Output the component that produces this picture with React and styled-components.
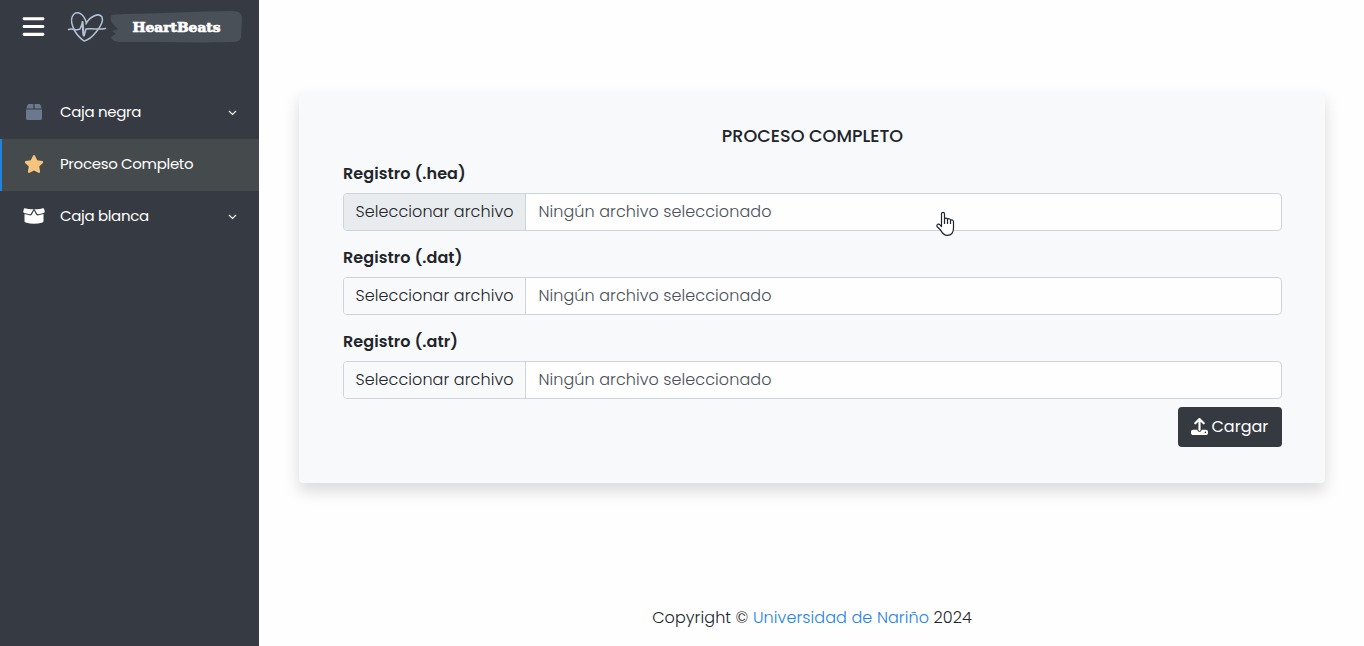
import React from "react";
import styled, { createGlobalStyle } from "styled-components";
import { FaBars, FaStar, FaUpload } from "react-icons/fa6";

const GlobalStyle = createGlobalStyle`
  *, *::before, *::after { box-sizing: border-box; }
  body {
    margin: 0;
    background: #fefefe;
    color: #212529;
    font: 300 16px/24px Poppins, Inter, "Open Sans", sans-serif;
    overflow: hidden;
  }
`;

const Page = styled.div`
  display: flex;
  height: 100vh;
`;

const Sidebar = styled.aside`
  flex: 0 0 259px;
  background: #363a42;
  color: #fff;
`;

const Brand = styled.header`
  display: flex;
  align-items: center;
  height: 54px;
  padding-left: 22px;
`;

const MenuButton = styled.button`
  display: flex;
  width: 23px;
  padding: 0 0 1px;
  border: 0;
  background: none;
  color: #fff;
`;

const Logo = styled.svg`
  display: block;
  margin-left: 20px;
  font: 700 13.5px "DejaVu Serif", serif;
`;

const Nav = styled.nav`
  padding-top: 33px;
`;

const NavItem = styled.a`
  display: flex;
  align-items: center;
  height: 52px;
  padding-right: 22px;
  border-left: 2px solid ${(p) => (p.$active ? "#1f83e0" : "transparent")};
  background: ${(p) => (p.$active ? "#454a4d" : "transparent")};
  font-size: 15px;
  font-weight: 400;
`;

const NavIcon = styled.span`
  display: flex;
  justify-content: center;
  width: 64px;
  margin-right: -6px;
  padding-bottom: 2px;
  color: ${(p) => p.$color};
  flex: none;
`;

const NavLabel = styled.span`
  flex: 1;
  padding-bottom: 2px;
`;

const Fit = styled.span`
  letter-spacing: ${(p) => p.$track || 0}px;
  white-space: nowrap;
`;

const Main = styled.main`
  flex: 1;
  display: flex;
  flex-direction: column;
  padding: 92px 39px 0 40px;
`;

const Card = styled.form`
  height: 391px;
  padding: 32px 43px 36px 44px;
  border-radius: 4px;
  background: #f8f9fb;
  box-shadow: 0 8px 16px rgba(0, 0, 0, 0.15);
`;

const Title = styled.h1`
  margin: 0 0 14px;
  font-size: 17.6px;
  line-height: 24px;
  font-weight: 500;
  text-align: center;
`;

const Field = styled.div`
  margin-bottom: ${(p) => (p.$last ? 8 : 15)}px;
`;

const Label = styled.label`
  display: block;
  margin-bottom: 7px;
  font-weight: 600;
`;

const FileInput = styled.div`
  display: flex;
  height: 38px;
  border: 1px solid #ced4da;
  border-radius: 4px;
  background: #fefefe;
  overflow: hidden;
  line-height: 35px;
`;

const FileButton = styled.span`
  flex: 0 0 182px;
  padding-left: 11.5px;
  border-right: 1px solid #ced4da;
  background: ${(p) => (p.$hover ? "#e9ecef" : "#f8f9fb")};
`;

const FileName = styled.span`
  padding-left: 12.5px;
  color: #495057;
`;

const Actions = styled.div`
  display: flex;
  justify-content: flex-end;
`;

const Submit = styled.button`
  display: flex;
  align-items: center;
  gap: 3.5px;
  width: 104px;
  height: 40px;
  padding: 0 0 0 13px;
  border: 0;
  border-radius: 4px;
  background: #343a40;
  color: #fff;
  font: inherit;
  font-weight: 400;
`;

const SubmitIcon = styled(FaUpload)`
  width: 17px;
  height: 17px;
  margin-bottom: 2px;
`;

const Footer = styled.footer`
  margin-top: 123px;
  text-align: center;
`;

const Link = styled.a`
  color: #1f83e8;
`;

const Pointer = styled.svg`
  position: absolute;
  left: 935px;
  top: 211px;
`;

function Chevron() {
  return (
    <svg width="9" height="6" viewBox="0 0 9 6" fill="none" stroke="#fff" strokeWidth="1.2">
      <path d="M1 1 4.5 4.5 8 1" />
    </svg>
  );
}

function ClosedBox() {
  return (
    <svg width="16" height="16" viewBox="0 0 16 16" fill="currentColor">
      <path d="M3 0H7.400V4.500H.3L1.400 1.200Q1.900 0 3 0ZM8.600 0H13Q14.100 0 14.600 1.200L15.700 4.500H8.600ZM0 5.600H16V14.500Q16 16 14.500 16H1.500Q0 16 0 14.500Z" />
    </svg>
  );
}

function OpenBox() {
  return (
    <svg width="22" height="16" viewBox="0 0 22 16" fill="currentColor">
      <path d="M2 .3Q6.500 1.600 10.600 1L8 5.600Q7.500 6.500 6.500 6.300L1.200 5Q.1 4.600.3 3.500L.8 1.200Q1.100.1 2 .3ZM20 .3Q15.500 1.600 11.400 1L14 5.600Q14.500 6.500 15.500 6.300L20.800 5Q21.900 4.600 21.700 3.500L21.200 1.200Q20.900.1 20 .3ZM11 2.600 13 6.200Q13.900 7.700 15.600 7.300L20.500 6.100V13Q20.500 14.100 19.400 14.400Q11 17 2.600 14.400Q1.500 14.100 1.500 13V6.100L6.400 7.300Q8.100 7.700 9 6.200Z" />
    </svg>
  );
}

function BrandLogo() {
  return (
    <Logo width="180" height="40" viewBox="65 7 180 40">
      <path d="M112 15 C116 14 119 15 123 14 C155 14 198 11 232 11 C240 11 242 14 242 19 L241 37 C241 41 237 42 231 42 C198 43 160 42 122 42 C116 42 112 41 111 37 L116 34 112 31 118 29 112 23 C110 19 110 16 112 15Z" fill="#495057" />
      <g fill="none" stroke="#b4c1d5" strokeLinecap="round" strokeLinejoin="round">
        <path d="M86 22 C84 14 78 11 74 14 C68 20 74 34 84 41 C91 40 105 24 102 17 C99 12 89 17 86 24" strokeWidth="1.5" />
        <path d="M68.500 29.500 C73 28 76 31 80 29 L82 24 84 36 86 29 C93 28 97 30 105.500 28.500" strokeWidth="1.5" />
        <path d="M82.500 22 83.500 35" strokeWidth="2.2" />
      </g>
      <text x="132.500" y="32" fill="#fff" stroke="#fff" strokeWidth=".7" textLength="88" lengthAdjust="spacingAndGlyphs">HeartBeats</text>
    </Logo>
  );
}

const navItems = [
  { label: "Caja negra", icon: <ClosedBox />, color: "#6c788d", menu: true },
  { label: "Proceso Completo", icon: <FaStar size={20} />, color: "#f5c580", active: true },
  { label: "Caja blanca", icon: <OpenBox />, color: "#fff", menu: true },
];

const fields = [
  { label: "Registro (.hea)", hover: true },
  { label: "Registro (.dat)" },
  { label: "Registro (.atr)", last: true },
];

export default function App() {
  return (
    <Page>
      <GlobalStyle />
      <Sidebar>
        <Brand>
          <MenuButton aria-label="Menu"><FaBars size={25} /></MenuButton>
          <BrandLogo />
        </Brand>
        <Nav>
          {navItems.map((n) => (
            <NavItem key={n.label} $active={n.active}>
              <NavIcon $color={n.color}>{n.icon}</NavIcon>
              <NavLabel><Fit $track={-0.33}>{n.label}</Fit></NavLabel>
              {n.menu && <Chevron />}
            </NavItem>
          ))}
        </Nav>
      </Sidebar>
      <Main>
        <Card>
          <Title>PROCESO COMPLETO</Title>
          {fields.map((f) => (
            <Field key={f.label} $last={f.last}>
              <Label><Fit $track={0.07}>{f.label}</Fit></Label>
              <FileInput>
                <FileButton $hover={f.hover}><Fit $track={0.08}>Seleccionar archivo</Fit></FileButton>
                <FileName><Fit $track={0.07}>Ningún archivo seleccionado</Fit></FileName>
              </FileInput>
            </Field>
          ))}
          <Actions>
            <Submit type="button"><SubmitIcon /><Fit>Cargar</Fit></Submit>
          </Actions>
        </Card>
        <Footer>
          <Fit $track={0.09}>Copyright © <Link>Universidad de Nariño</Link> 2024</Fit>
        </Footer>
      </Main>
      <Pointer width="21" height="26" viewBox="0 0 21 26">
        <path d="M6.500 15.500 V3 C6.500 .8 9.500 .8 9.500 3 V8 C10 6.500 12.500 6.800 12.500 8.500 C13 7.200 15.500 7.500 15.500 9.300 C16.500 8.300 18.500 9 18.500 11 V17 C18.500 21.500 16 24.300 12.300 24.300 C8.500 24.300 7 21.500 5.500 19 L2 15.500 C1.300 13.500 3.500 12.300 5 13.800Z M9.500 8V13 M12.500 8.500V13 M15.500 9.500V13" fill="#fff" stroke="#20242c" strokeWidth="1.2" strokeLinejoin="round" />
      </Pointer>
    </Page>
  );
}
